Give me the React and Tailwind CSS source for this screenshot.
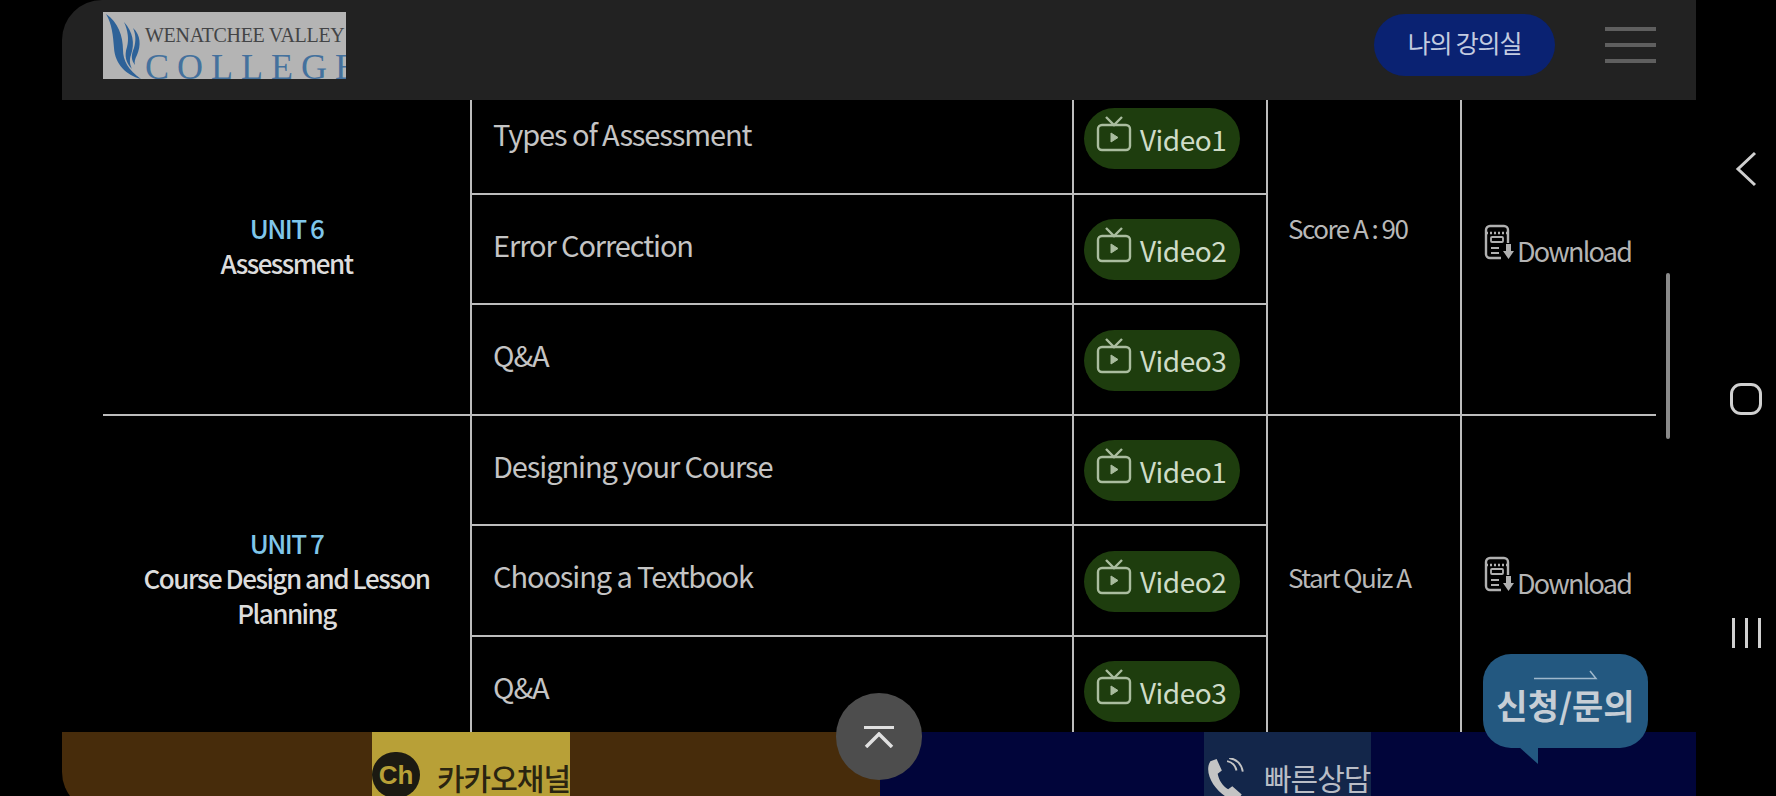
const font = { fontFamily: '"Noto Sans CJK KR", "Noto Sans", sans-serif' }

const units = [
  {
    name: 'UNIT 6',
    title: ['Assessment'],
    score: 'Score A : 90',
    scoreClass: 'pb-[42px]',
    lessons: ['Types of Assessment', 'Error Correction', 'Q&A'],
  },
  {
    name: 'UNIT 7',
    title: ['Course Design and Lesson', 'Planning'],
    score: 'Start Quiz A',
    scoreClass: 'pb-[8px]',
    lessons: ['Designing your Course', 'Choosing a Textbook', 'Q&A'],
  },
]

function TvIcon() {
  return (
    <svg width="36" height="36" viewBox="0 0 36 36" fill="none" stroke="#aabd9f" strokeWidth="2.400" className="shrink-0">
      <rect x="2" y="9" width="32" height="25" rx="4" />
      <path d="M10 1l8 8 8-8" />
      <path d="M15 17v9l7-4.500z" fill="#aabd9f" strokeWidth="1" />
    </svg>
  )
}

function DownloadIcon() {
  return (
    <svg width="31" height="37" viewBox="0 0 31 37" fill="none" stroke="#b0b0b0" strokeWidth="2.400" className="mb-[5px] shrink-0">
      <path d="M17 34H6a4 4 0 0 1-4-4V6a4 4 0 0 1 4-4h14a4 4 0 0 1 4 4v13" />
      <path d="M2 9h22" strokeDasharray="2 2" />
      <rect x="7" y="13" width="12" height="5" rx="1" strokeWidth="1.800" />
      <path d="M7 24h8M7 29h8" strokeWidth="1.800" />
      <path d="M22 20h5v7h3l-5.500 8-5.500-8h3z" fill="#b0b0b0" stroke="none" />
    </svg>
  )
}

function Logo() {
  return (
    <div className="relative h-[67px] w-[243px] overflow-hidden bg-[#b4b4b4]" style={{ fontFamily: '"Liberation Serif", serif' }}>
      <svg width="50" height="67" viewBox="0 0 50 67" className="absolute left-0 top-0" fill="#2e6298">
        <path d="M3 2c12 8 17 22 17 36 0 10 5 20 18 29-15-4-26-15-27-31C10 23 9 12 3 2z" />
        <path d="M21 10c9 10 11 21 7 33-2 5-1 10 1 14-6-6-8-13-5-22 2-8 1-16-3-25z" />
        <path d="M30 16c8 7 8 18 4 27-2 4-3 7-2 10-4-5-4-10-1-17 2-7 2-13-1-20z" />
      </svg>
      <div className="absolute left-[42px] top-[11px] whitespace-nowrap text-[20px] leading-[24px] tracking-[-0.300px] text-[#434446]">WENATCHEE VALLEY</div>
      <div className="absolute left-[42px] top-[35px] whitespace-nowrap text-[36px] leading-[40px] tracking-[8px] text-[#44719d]">COLLEGE</div>
    </div>
  )
}

function VideoPill({ n }) {
  return (
    <div className="flex h-[61px] w-[156px] items-center gap-[8px] rounded-full bg-[#1e3d0e] pl-[12px]">
      <div className="-mt-[9px]"><TvIcon /></div>
      <span className="text-[28px] tracking-[-0.500px] text-[#cfdcc8]">Video{n}</span>
    </div>
  )
}

function UnitRows({ unit }) {
  return unit.lessons.map((lesson, i) => (
    <tr key={lesson} className="h-[110.500px]">
      {i === 0 ? (
        <td rowSpan={3} className="border-b-2 border-[#bcbcbc] pb-[6px] text-center text-[26px] font-medium leading-[35px] tracking-[-1.500px] text-[#dcdcdc]">
          <div className="text-[#7fc6ea]">{unit.name}</div>
          {unit.title.map((t) => <div key={t}>{t}</div>)}
        </td>
      ) : null}
      <td className="border-x-2 border-b-2 border-[#bcbcbc] pb-[9px] pl-[21px] text-[29px] tracking-[-1.100px] text-[#c4c4c4]">{lesson}</td>
      <td className="border-b-2 border-[#bcbcbc] pl-[10px] pt-[2px]"><VideoPill n={i + 1} /></td>
      {i === 0 ? (
        <>
          <td rowSpan={3} className={`border-x-2 border-b-2 border-[#bcbcbc] pl-[20px] text-[26px] tracking-[-1.500px] text-[#b8b8b8] ${unit.scoreClass}`}>{unit.score}</td>
          <td rowSpan={3} className="border-b-2 border-[#bcbcbc] pb-[6px] pl-[22px]">
            <div className="flex items-end gap-[2px] text-[27px] leading-[30px] tracking-[-1.800px] text-[#b4b4b4]">
              <DownloadIcon />
              <span>Download</span>
            </div>
          </td>
        </>
      ) : null}
    </tr>
  ))
}

function SideNav() {
  return (
    <div className="flex w-[80px] shrink-0 flex-col items-center gap-[196px] pl-[20px] pt-[151px]">
      <svg width="24" height="36" viewBox="0 0 24 36" fill="none" stroke="#d0d0d0" strokeWidth="3"><path d="M21 2L4 18l17 16" /></svg>
      <div className="h-[32px] w-[32px] rounded-[11px] border-[3px] border-[#d0d0d0]" />
      <div className="mt-[7px] flex gap-[10px]">
        <div className="h-[30px] w-[3px] bg-[#d0d0d0]" />
        <div className="h-[30px] w-[3px] bg-[#d0d0d0]" />
        <div className="h-[30px] w-[3px] bg-[#d0d0d0]" />
      </div>
    </div>
  )
}

export default function App() {
  return (
    <div className="flex h-[796px] w-[1776px] overflow-hidden bg-black pl-[62px]" style={font}>
      <div className="relative flex w-[1634px] shrink-0 flex-col">
        <header className="z-10 flex h-[100px] shrink-0 items-center rounded-tl-[40px] bg-[#222222] pl-[41px] pr-[40px]">
          <div className="-mt-[10px]"><Logo /></div>
          <div className="-mt-[10px] ml-auto flex h-[62px] w-[181px] items-center justify-center rounded-full bg-[#0a2272] pb-[5px] text-[25px] tracking-[-1.200px] text-[#c3cbe0]">나의 강의실</div>
          <div className="-mt-[10px] ml-[50px] flex w-[51px] flex-col gap-[12px]">
            <div className="h-[4px] bg-[#5f5f5f]" />
            <div className="h-[4px] bg-[#5f5f5f]" />
            <div className="h-[4px] bg-[#5f5f5f]" />
          </div>
        </header>

        <div className="min-h-0 flex-1 overflow-hidden pl-[41px]">
          <table className="-mt-[17px] w-[1553px] table-fixed border-collapse">
            <colgroup>
              <col className="w-[368px]" />
              <col className="w-[602px]" />
              <col className="w-[194px]" />
              <col className="w-[194px]" />
              <col className="w-[195px]" />
            </colgroup>
            <tbody>
              {units.map((unit) => <UnitRows key={unit.name} unit={unit} />)}
            </tbody>
          </table>
        </div>

        <footer className="flex h-[64px] shrink-0 items-start overflow-hidden">
          <div className="flex h-[80px] w-[818px] justify-center rounded-bl-[40px] bg-[#472c0b]">
            <div className="flex h-[80px] w-[198px] items-start gap-[17px] bg-[#b8a037] pt-[20px]">
              <div className="flex h-[46px] w-[48px] shrink-0 items-center justify-center rounded-full bg-[#1c1a12] text-[26px] font-bold text-[#b8a037]" style={{ fontFamily: '"Liberation Sans", sans-serif' }}>Ch</div>
              <span className="whitespace-nowrap text-[30px] font-medium leading-[50px] tracking-[-1px] text-[#2a2410]">카카오채널</span>
            </div>
          </div>
          <div className="flex h-[80px] flex-1 bg-[#01053a] pl-[324px]">
            <div className="flex h-[80px] w-[167px] items-start gap-[18px] bg-[#13264a] pt-[26px]">
              <svg width="42" height="46" viewBox="0 0 38 44" fill="#c4c4c4" className="shrink-0">
                <path d="M5 3l6-2 5 11-4 3c1 6 5 12 10 15l4-3 9 8-4 5C18 42-4 18 5 3z" />
                <path d="M21 3c5 1 8 4 9 9M23 0c7 1 12 6 13 13" fill="none" stroke="#c4c4c4" strokeWidth="1.800" />
              </svg>
              <span className="whitespace-nowrap text-[30px] leading-[38px] tracking-[-1px] text-[#b9bdc6]">빠른상담</span>
            </div>
          </div>
        </footer>

        <button className="absolute left-[774px] top-[693px] flex h-[87px] w-[86px] flex-col items-center justify-center gap-[3px] rounded-full bg-[#4d4d4d]">
          <div className="h-[3px] w-[30px] bg-[#e0e0e0]" />
          <svg width="30" height="16" viewBox="0 0 30 16" fill="none" stroke="#e0e0e0" strokeWidth="3.500"><path d="M2 15L15 2l13 13" /></svg>
        </button>

        <div className="absolute left-[1421px] top-[654px] h-[94px] w-[165px] rounded-[28px] bg-[#235880] pt-[16px] text-center">
          <svg width="66" height="10" viewBox="0 0 66 10" fill="none" stroke="#9fb8cc" strokeWidth="1.500" className="mx-auto block">
            <path d="M1 8.500h62L57 1" />
          </svg>
          <div className="mt-[2px] whitespace-nowrap text-[34px] font-bold leading-[46px] text-[#c6ced6]">신청/문의</div>
          <div className="absolute left-[35px] top-[92px] h-0 w-0 border-l-[20px] border-r-0 border-t-[18px] border-l-transparent border-t-[#235880]" />
        </div>

        <div className="absolute left-[1604px] top-[273px] h-[166px] w-[4px] rounded-full bg-[#8a8a8a]" />
      </div>
      <SideNav />
    </div>
  )
}
